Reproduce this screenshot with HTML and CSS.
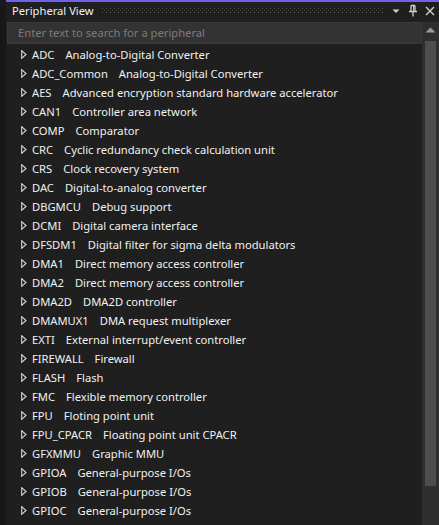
FILE: index.html
```html
<!DOCTYPE html>
<html>
<head>
<meta charset="utf-8">
<link rel="stylesheet" href="styles.css">
</head>
<body>
<div class="window">
  <div class="accent"></div>
  <div class="titlebar">
    <span class="title">Peripheral View</span>
    <div class="grip"></div>
    <div class="tools">
      <svg class="tool" width="9" height="6" viewBox="0 0 9 6"><path d="M0.5 1.5 H7.5 L4 5 Z" fill="#d0d0d0"/></svg>
      <svg class="tool" width="10" height="13" viewBox="0 0 10 13"><path d="M3 1.5 H7 M3 1.5 V7 M7 1.5 V7 M1 7.5 H9 M5 7.5 V12.5" stroke="#d0d0d0" stroke-width="1.3" fill="none"/><path d="M5.6 2 V7" stroke="#d0d0d0" stroke-width="1"/></svg>
      <svg class="tool" width="10" height="10" viewBox="0 0 10 10"><path d="M1 1 L9 9 M9 1 L1 9" stroke="#d0d0d0" stroke-width="1.4"/></svg>
    </div>
  </div>
  <div class="body">
    <div class="main">
      <div class="search">Enter text to search for a peripheral</div>
      <div class="tree">
        <div class="row"><svg class="tri" width="6" height="9" viewBox="0 0 6 9"><path d="M0.7 0.7 L5 4.5 L0.7 8.3 Z" fill="none" stroke="#d8d8d8" stroke-width="1.1"/></svg><span class="name">ADC</span><span class="desc">Analog-to-Digital Converter</span></div>
        <div class="row"><svg class="tri" width="6" height="9" viewBox="0 0 6 9"><path d="M0.7 0.7 L5 4.5 L0.7 8.3 Z" fill="none" stroke="#d8d8d8" stroke-width="1.1"/></svg><span class="name">ADC_Common</span><span class="desc">Analog-to-Digital Converter</span></div>
        <div class="row"><svg class="tri" width="6" height="9" viewBox="0 0 6 9"><path d="M0.7 0.7 L5 4.5 L0.7 8.3 Z" fill="none" stroke="#d8d8d8" stroke-width="1.1"/></svg><span class="name">AES</span><span class="desc">Advanced encryption standard hardware accelerator</span></div>
        <div class="row"><svg class="tri" width="6" height="9" viewBox="0 0 6 9"><path d="M0.7 0.7 L5 4.5 L0.7 8.3 Z" fill="none" stroke="#d8d8d8" stroke-width="1.1"/></svg><span class="name">CAN1</span><span class="desc">Controller area network</span></div>
        <div class="row"><svg class="tri" width="6" height="9" viewBox="0 0 6 9"><path d="M0.7 0.7 L5 4.5 L0.7 8.3 Z" fill="none" stroke="#d8d8d8" stroke-width="1.1"/></svg><span class="name">COMP</span><span class="desc">Comparator</span></div>
        <div class="row"><svg class="tri" width="6" height="9" viewBox="0 0 6 9"><path d="M0.7 0.7 L5 4.5 L0.7 8.3 Z" fill="none" stroke="#d8d8d8" stroke-width="1.1"/></svg><span class="name">CRC</span><span class="desc">Cyclic redundancy check calculation unit</span></div>
        <div class="row"><svg class="tri" width="6" height="9" viewBox="0 0 6 9"><path d="M0.7 0.7 L5 4.5 L0.7 8.3 Z" fill="none" stroke="#d8d8d8" stroke-width="1.1"/></svg><span class="name">CRS</span><span class="desc">Clock recovery system</span></div>
        <div class="row"><svg class="tri" width="6" height="9" viewBox="0 0 6 9"><path d="M0.7 0.7 L5 4.5 L0.7 8.3 Z" fill="none" stroke="#d8d8d8" stroke-width="1.1"/></svg><span class="name">DAC</span><span class="desc">Digital-to-analog converter</span></div>
        <div class="row"><svg class="tri" width="6" height="9" viewBox="0 0 6 9"><path d="M0.7 0.7 L5 4.5 L0.7 8.3 Z" fill="none" stroke="#d8d8d8" stroke-width="1.1"/></svg><span class="name">DBGMCU</span><span class="desc">Debug support</span></div>
        <div class="row"><svg class="tri" width="6" height="9" viewBox="0 0 6 9"><path d="M0.7 0.7 L5 4.5 L0.7 8.3 Z" fill="none" stroke="#d8d8d8" stroke-width="1.1"/></svg><span class="name">DCMI</span><span class="desc">Digital camera interface</span></div>
        <div class="row"><svg class="tri" width="6" height="9" viewBox="0 0 6 9"><path d="M0.7 0.7 L5 4.5 L0.7 8.3 Z" fill="none" stroke="#d8d8d8" stroke-width="1.1"/></svg><span class="name">DFSDM1</span><span class="desc">Digital filter for sigma delta modulators</span></div>
        <div class="row"><svg class="tri" width="6" height="9" viewBox="0 0 6 9"><path d="M0.7 0.7 L5 4.5 L0.7 8.3 Z" fill="none" stroke="#d8d8d8" stroke-width="1.1"/></svg><span class="name">DMA1</span><span class="desc">Direct memory access controller</span></div>
        <div class="row"><svg class="tri" width="6" height="9" viewBox="0 0 6 9"><path d="M0.7 0.7 L5 4.5 L0.7 8.3 Z" fill="none" stroke="#d8d8d8" stroke-width="1.1"/></svg><span class="name">DMA2</span><span class="desc">Direct memory access controller</span></div>
        <div class="row"><svg class="tri" width="6" height="9" viewBox="0 0 6 9"><path d="M0.7 0.7 L5 4.5 L0.7 8.3 Z" fill="none" stroke="#d8d8d8" stroke-width="1.1"/></svg><span class="name">DMA2D</span><span class="desc">DMA2D controller</span></div>
        <div class="row"><svg class="tri" width="6" height="9" viewBox="0 0 6 9"><path d="M0.7 0.7 L5 4.5 L0.7 8.3 Z" fill="none" stroke="#d8d8d8" stroke-width="1.1"/></svg><span class="name">DMAMUX1</span><span class="desc">DMA request multiplexer</span></div>
        <div class="row"><svg class="tri" width="6" height="9" viewBox="0 0 6 9"><path d="M0.7 0.7 L5 4.5 L0.7 8.3 Z" fill="none" stroke="#d8d8d8" stroke-width="1.1"/></svg><span class="name">EXTI</span><span class="desc">External interrupt/event controller</span></div>
        <div class="row"><svg class="tri" width="6" height="9" viewBox="0 0 6 9"><path d="M0.7 0.7 L5 4.5 L0.7 8.3 Z" fill="none" stroke="#d8d8d8" stroke-width="1.1"/></svg><span class="name">FIREWALL</span><span class="desc">Firewall</span></div>
        <div class="row"><svg class="tri" width="6" height="9" viewBox="0 0 6 9"><path d="M0.7 0.7 L5 4.5 L0.7 8.3 Z" fill="none" stroke="#d8d8d8" stroke-width="1.1"/></svg><span class="name">FLASH</span><span class="desc">Flash</span></div>
        <div class="row"><svg class="tri" width="6" height="9" viewBox="0 0 6 9"><path d="M0.7 0.7 L5 4.5 L0.7 8.3 Z" fill="none" stroke="#d8d8d8" stroke-width="1.1"/></svg><span class="name">FMC</span><span class="desc">Flexible memory controller</span></div>
        <div class="row"><svg class="tri" width="6" height="9" viewBox="0 0 6 9"><path d="M0.7 0.7 L5 4.5 L0.7 8.3 Z" fill="none" stroke="#d8d8d8" stroke-width="1.1"/></svg><span class="name">FPU</span><span class="desc">Floting point unit</span></div>
        <div class="row"><svg class="tri" width="6" height="9" viewBox="0 0 6 9"><path d="M0.7 0.7 L5 4.5 L0.7 8.3 Z" fill="none" stroke="#d8d8d8" stroke-width="1.1"/></svg><span class="name">FPU_CPACR</span><span class="desc">Floating point unit CPACR</span></div>
        <div class="row"><svg class="tri" width="6" height="9" viewBox="0 0 6 9"><path d="M0.7 0.7 L5 4.5 L0.7 8.3 Z" fill="none" stroke="#d8d8d8" stroke-width="1.1"/></svg><span class="name">GFXMMU</span><span class="desc">Graphic MMU</span></div>
        <div class="row"><svg class="tri" width="6" height="9" viewBox="0 0 6 9"><path d="M0.7 0.7 L5 4.5 L0.7 8.3 Z" fill="none" stroke="#d8d8d8" stroke-width="1.1"/></svg><span class="name">GPIOA</span><span class="desc">General-purpose I/Os</span></div>
        <div class="row"><svg class="tri" width="6" height="9" viewBox="0 0 6 9"><path d="M0.7 0.7 L5 4.5 L0.7 8.3 Z" fill="none" stroke="#d8d8d8" stroke-width="1.1"/></svg><span class="name">GPIOB</span><span class="desc">General-purpose I/Os</span></div>
        <div class="row"><svg class="tri" width="6" height="9" viewBox="0 0 6 9"><path d="M0.7 0.7 L5 4.5 L0.7 8.3 Z" fill="none" stroke="#d8d8d8" stroke-width="1.1"/></svg><span class="name">GPIOC</span><span class="desc">General-purpose I/Os</span></div>
      </div>
    </div>
    <div class="scrollbar">
      <svg class="up" width="11" height="6" viewBox="0 0 11 6"><path d="M0.5 5.5 L5.5 0.5 L10.5 5.5 Z" fill="#9a9a9a"/></svg>
      <div class="thumb"></div>
    </div>
  </div>
</div>
</body>
</html>
```

FILE: styles.css
```css
html, body {
  margin: 0;
  padding: 0;
  background: #1f1f1f;
}
.window {
  width: 439px;
  height: 525px;
  overflow: hidden;
  display: flex;
  flex-direction: column;
  background: #1f1f1f;
  border-left: 6px solid #181818;
  box-sizing: border-box;
  font-family: "Noto Sans", "Open Sans", sans-serif;
  font-size: 11.2px;
}
.accent {
  height: 2px;
  background: #7160e8;
  flex: none;
}
.titlebar {
  height: 20px;
  box-sizing: border-box;
  padding-bottom: 3px;
  display: flex;
  align-items: center;
  padding-left: 6px;
  flex: none;
}
.title {
  color: #f1f1f1;
  font-size: 11.2px;
  line-height: 17px;
}
.grip {
  flex: 1;
  height: 5px;
  margin: 0 8px 0 8px;
  background-image:
    radial-gradient(circle at 0.5px 0.5px, #505050 0.75px, transparent 0.8px),
    radial-gradient(circle at 0.5px 0.5px, #505050 0.75px, transparent 0.8px);
  background-size: 4px 4px, 4px 4px;
  background-position: 0 0, 2px 2px;
}
.tools {
  display: flex;
  align-items: center;
  gap: 7px;
  padding-right: 4px;
}
.tool {
  display: block;
}
.body {
  flex: 1;
  display: flex;
  min-height: 0;
}
.main {
  flex: 1;
  display: flex;
  flex-direction: column;
  min-width: 0;
}
.search {
  height: 22px;
  margin-left: 1px;
  background: #333333;
  border: 1px solid #3a3a3a;
  box-sizing: border-box;
  color: #7c7c7c;
  line-height: 20px;
  padding-left: 10px;
  font-size: 11.2px;
}
.tree {
  padding-top: 1px;
}
.row {
  height: 19px;
  display: flex;
  align-items: center;
  padding-left: 15px;
  color: #f1f1f1;
  white-space: nowrap;
}
.tri {
  flex: none;
  margin-right: 5px;
}
.name {
  margin-right: 11px;
}
.scrollbar {
  width: 17px;
  flex: none;
  background: #2e2e2e;
  display: flex;
  flex-direction: column;
  align-items: center;
}
.up {
  margin-top: 5px;
  display: block;
}
.thumb {
  width: 11px;
  height: 445px;
  margin-top: 8px;
  background: #4d4d4d;
}
```
